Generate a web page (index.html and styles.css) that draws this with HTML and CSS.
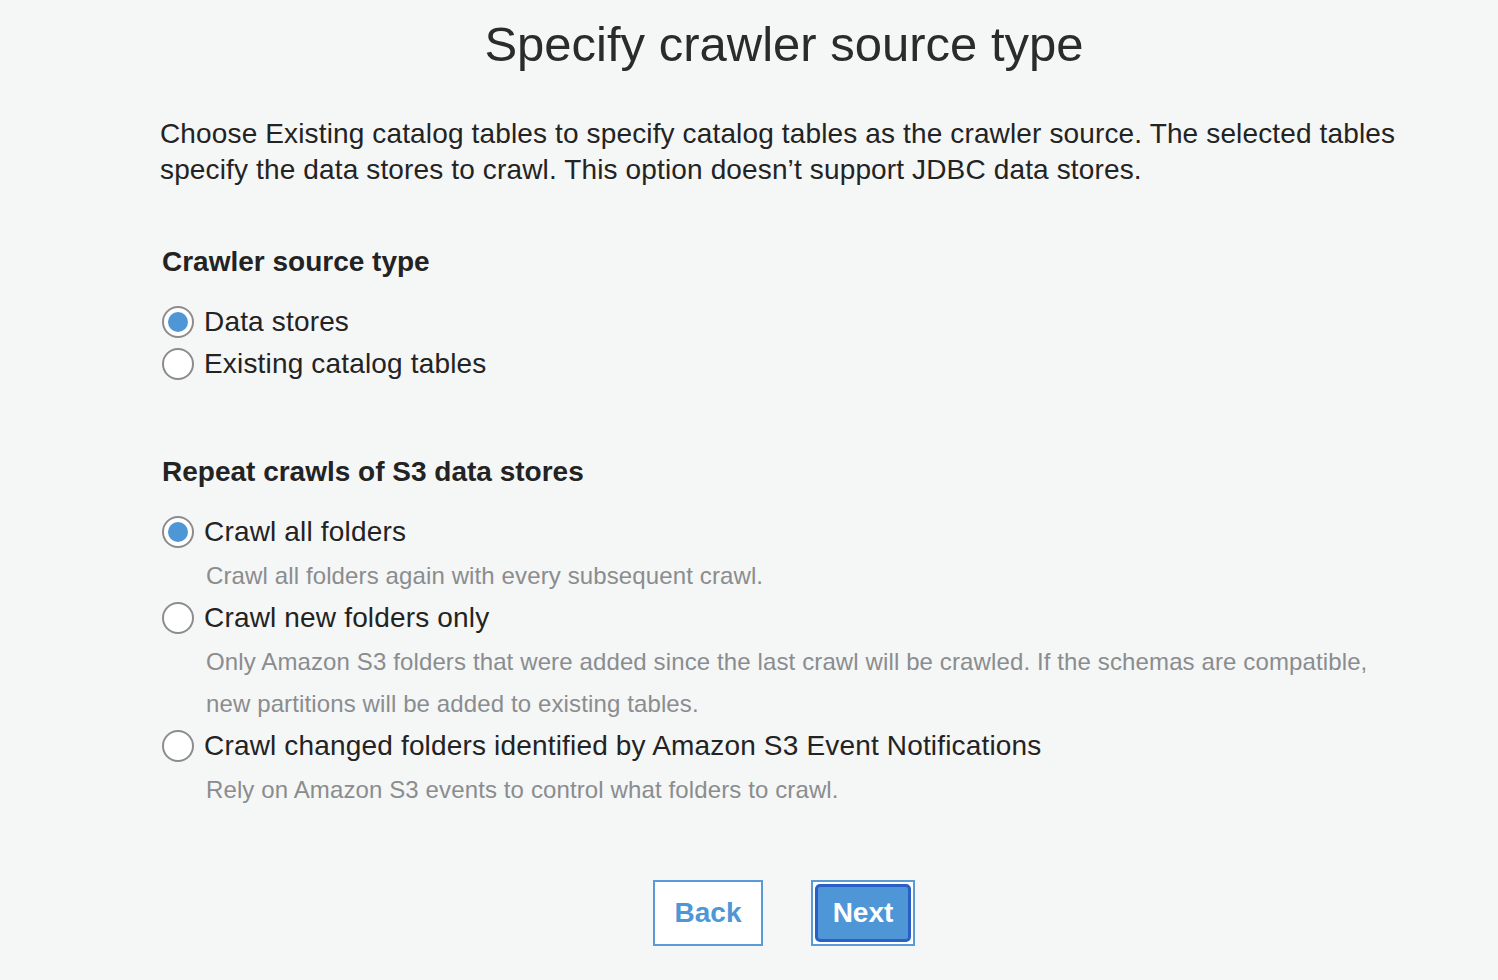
FILE: index.html
```html
<!DOCTYPE html>
<html>
<head>
<meta charset="utf-8">
<link rel="stylesheet" href="styles.css">
</head>
<body>
<div class="page">
  <h1 class="title">Specify crawler source type</h1>
  <p class="intro">Choose Existing catalog tables to specify catalog tables as the crawler source. The selected tables specify the data stores to crawl. This option doesn’t support JDBC data stores.</p>

  <section class="group first">
    <h2 class="group-title">Crawler source type</h2>
    <div class="options">
      <label class="option"><span class="radio checked"></span><span class="label">Data stores</span></label>
      <label class="option"><span class="radio"></span><span class="label">Existing catalog tables</span></label>
    </div>
  </section>

  <section class="group second">
    <h2 class="group-title">Repeat crawls of S3 data stores</h2>
    <div class="options">
      <div class="opt-block">
        <label class="option"><span class="radio checked"></span><span class="label">Crawl all folders</span></label>
        <p class="desc">Crawl all folders again with every subsequent crawl.</p>
      </div>
      <div class="opt-block">
        <label class="option"><span class="radio"></span><span class="label">Crawl new folders only</span></label>
        <p class="desc">Only Amazon S3 folders that were added since the last crawl will be crawled. If the schemas are compatible, new partitions will be added to existing tables.</p>
      </div>
      <div class="opt-block">
        <label class="option"><span class="radio"></span><span class="label">Crawl changed folders identified by Amazon S3 Event Notifications</span></label>
        <p class="desc">Rely on Amazon S3 events to control what folders to crawl.</p>
      </div>
    </div>
  </section>

  <div class="actions">
    <button class="btn back">Back</button>
    <span class="focus-ring"><button class="btn next">Next</button></span>
  </div>
</div>
</body>
</html>
```
FILE: styles.css
```css
* { box-sizing: border-box; }
html, body {
  margin: 0;
  padding: 0;
  background: #f5f6f6;
  font-family: "Liberation Sans", Arial, Helvetica, sans-serif;
  color: #232323;
}
.page {
  width: 1248px;
  margin-left: 160px;
  padding-top: 14px;
}
.title {
  margin: 0;
  text-align: center;
  font-weight: normal;
  font-size: 49px;
  line-height: 60px;
  color: #2b2b2b;
}
.intro {
  margin: 42px 0 0 0;
  font-size: 28px;
  line-height: 36px;
  letter-spacing: 0.14px;
  color: #232323;
}
.group { padding-left: 2px; }
.group.first { margin-top: 56px; }
.group.second { margin-top: 69px; }
.group-title {
  margin: 0;
  font-size: 28px;
  line-height: 36px;
  font-weight: bold;
  color: #232323;
}
.options {
  margin-top: 21px;
  display: flex;
  flex-direction: column;
}
.option {
  display: flex;
  align-items: center;
  height: 42px;
  gap: 10px;
}
.radio {
  width: 32px;
  height: 32px;
  border-radius: 50%;
  border: 2px solid #8c8c8c;
  background: #fff;
  flex: none;
  position: relative;
}
.radio.checked::after {
  content: "";
  position: absolute;
  left: 4px;
  top: 4px;
  width: 20px;
  height: 20px;
  border-radius: 50%;
  background: #4f96d6;
}
.label {
  font-size: 28px;
  letter-spacing: 0.17px;
  color: #232323;
}
.desc {
  margin: 2px 0 0 0;
  padding-left: 44px;
  max-width: 1224px;
  font-size: 24px;
  line-height: 42px;
  letter-spacing: 0.12px;
  color: #8a8d8f;
}
.actions {
  margin-top: 69px;
  display: flex;
  justify-content: center;
  align-items: flex-start;
  gap: 48px;
}
.btn {
  font-family: "Liberation Sans", Arial, Helvetica, sans-serif;
  font-size: 28px;
  font-weight: bold;
  height: 66px;
  padding: 0;
  cursor: pointer;
}
.btn.back {
  width: 110px;
  background: #fff;
  color: #4f96d6;
  border: 2px solid #5a9bd5;
}
.focus-ring {
  display: flex;
  width: 104px;
  height: 66px;
  padding: 2px;
  background: #fff;
  border: 2px solid #5a9bd5;
}
.btn.next {
  width: 96px;
  height: 58px;
  background: #4f96d6;
  color: #fff;
  border: 3px solid #2b5fc8;
  border-radius: 5px;
}
```
